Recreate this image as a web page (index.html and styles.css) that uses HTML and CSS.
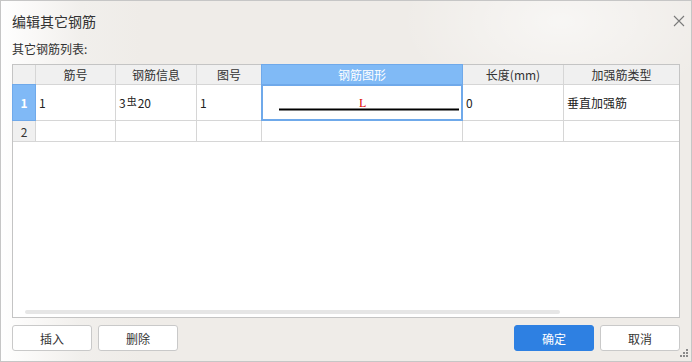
FILE: index.html
```html
<!DOCTYPE html>
<html lang="zh-CN">
<head>
<meta charset="utf-8">
<title>编辑其它钢筋</title>
<link rel="stylesheet" href="styles.css">
</head>
<body>
<div class="dialog">
  <div class="titlebar">
    <span class="title">编辑其它钢筋</span>
    <svg class="close" width="12" height="12" viewBox="0 0 12 12"><path d="M1 1 L11 11 M11 1 L1 11" stroke="#7a7a7a" stroke-width="1.1" fill="none"/></svg>
  </div>
  <div class="label">其它钢筋列表:</div>
  <div class="tablebox">
    <div class="grid">
      <div class="hd corner"></div>
      <div class="hd">筋号</div>
      <div class="hd">钢筋信息</div>
      <div class="hd">图号</div>
      <div class="hd hd-sel">钢筋图形</div>
      <div class="hd">长度(mm)</div>
      <div class="hd">加强筋类型</div>

      <div class="rh rh-sel">1</div>
      <div class="cell">1</div>
      <div class="cell">3<span class="sym">虫</span>20</div>
      <div class="cell">1</div>
      <div class="cell shape">
        <svg width="198" height="33" viewBox="0 0 198 33">
          <line x1="16" y1="23.5" x2="196" y2="23.5" stroke="#000" stroke-width="2"/>
          <text x="96" y="21" class="lbl">L</text>
        </svg>
      </div>
      <div class="cell">0</div>
      <div class="cell">垂直加强筋</div>

      <div class="rh">2</div>
      <div class="cell"></div>
      <div class="cell"></div>
      <div class="cell"></div>
      <div class="cell"></div>
      <div class="cell"></div>
      <div class="cell"></div>
    </div>
    <div class="spacer"></div>
    <div class="hscroll"></div>
  </div>
  <div class="buttons">
    <div class="group">
      <button class="btn">插入</button>
      <button class="btn">删除</button>
    </div>
    <div class="group">
      <button class="btn primary">确定</button>
      <button class="btn">取消</button>
    </div>
  </div>
  <svg class="grip" width="8" height="8" viewBox="0 0 8 8">
    <rect x="6" y="0" width="2" height="2" fill="#8a8a8a"/>
    <rect x="3" y="3" width="2" height="2" fill="#8a8a8a"/>
    <rect x="6" y="3" width="2" height="2" fill="#8a8a8a"/>
    <rect x="0" y="6" width="2" height="2" fill="#8a8a8a"/>
    <rect x="3" y="6" width="2" height="2" fill="#8a8a8a"/>
    <rect x="6" y="6" width="2" height="2" fill="#8a8a8a"/>
  </svg>
</div>
</body>
</html>
```

FILE: styles.css
```css
* { box-sizing: border-box; }
html, body { margin: 0; padding: 0; }
body {
  width: 692px;
  height: 362px;
  font-family: "Noto Sans CJK SC", "Microsoft YaHei", sans-serif;
  font-size: 12px;
  color: #333;
}
.dialog {
  position: relative;
  width: 692px;
  height: 362px;
  border: 1px solid #c6c6c6;
  padding: 0 11px;
  display: flex;
  flex-direction: column;
  background:
    radial-gradient(ellipse 160px 90px at 560px 20px, rgba(255,255,255,0.55), rgba(255,255,255,0)),
    linear-gradient(90deg, #ffffff 0, #fbfaf9 25px, #f1efec 80px, #efece8 140px, #efece8 100%);
}
.titlebar {
  height: 38px;
  display: flex;
  align-items: center;
  justify-content: space-between;
}
.title {
  font-size: 14px;
  color: #333;
  line-height: 20px;
  margin-top: 1px;
}
.close { margin-right: -5px; margin-top: 1px; }
.label {
  height: 18px;
  line-height: 18px;
  margin-top: 1px;
}
.tablebox {
  margin-top: 6px;
  height: 254px;
  border: 1px solid #c4c4c4;
  background: #fff;
  display: flex;
  flex-direction: column;
}
.grid {
  display: grid;
  grid-template-columns: 22px 79px 80px 64px 200px 100px 115px;
  grid-template-rows: 19px 35px 20px;
  column-gap: 1px;
  row-gap: 1px;
  background: #d6d6d6;
  border-bottom: 1px solid #d6d6d6;
  width: 666px;
}
.hd {
  background: #f0f0f0;
  text-align: center;
  line-height: 19px;
  color: #333;
}
.hd-sel {
  background: #80baf6;
  color: #fff;
  box-shadow: 0 0 0 1px #6fa9ea;
  position: relative;
  z-index: 1;
}
.rh {
  background: #f0f0f0;
  text-align: center;
  display: flex;
  align-items: center;
  justify-content: center;
  color: #333;
}
.rh-sel {
  background: #80b9f6;
  color: #fff;
  font-weight: bold;
  box-shadow: 0 0 0 1px #6fa9ea;
  position: relative;
  z-index: 1;
}
.cell {
  background: #fff;
  display: flex;
  align-items: center;
  padding-left: 3px;
  color: #222;
  white-space: nowrap;
}
.sym {
  font-size: 10px;
  position: relative;
  top: -2px;
  margin: 0 1px 0 1px;
}
.shape {
  padding: 0;
  position: relative;
  z-index: 2;
  box-shadow: 0 0 0 1px #6fa9ea, inset 0 0 0 1px #6fa9ea;
  align-items: flex-start;
}
.shape svg { display: block; margin: 1px 0 0 1px; }
.lbl {
  font-family: "Liberation Serif", serif;
  font-size: 12px;
  fill: #e00000;
}
.spacer { flex: 1; }
.hscroll {
  height: 4px;
  width: 535px;
  margin: 0 0 3px 12px;
  border-radius: 2px;
  background: #e6e6e6;
}
.buttons {
  margin-top: 7px;
  display: flex;
  justify-content: space-between;
}
.group { display: flex; gap: 6px; }
.btn {
  width: 80px;
  height: 26px;
  border: 1px solid #c9c9c9;
  border-radius: 3px;
  background: #fff;
  font-family: "Noto Sans CJK SC", sans-serif;
  font-size: 12px;
  color: #333;
  padding: 0;
}
.btn.primary {
  background: #2e80e2;
  border-color: #2e80e2;
  color: #fff;
}
.grip {
  position: absolute;
  right: 3px;
  bottom: 4px;
}
```
